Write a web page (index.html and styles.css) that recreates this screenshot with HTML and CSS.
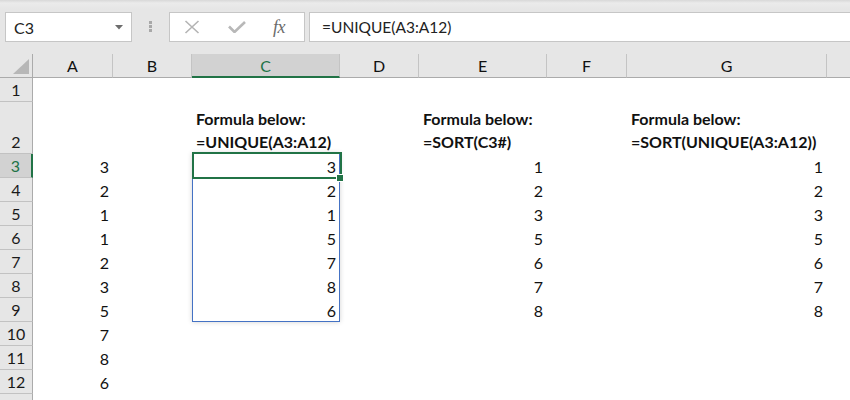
FILE: index.html
```html
<!DOCTYPE html>
<html>
<head>
<meta charset="utf-8">
<link rel="stylesheet" href="styles.css">
</head>
<body>
<div class="toolbar">
  <div class="namebox"><span>C3</span><svg class="dd" width="8" height="5" viewBox="0 0 8 5"><path d="M0 0h8L4 4.5z" fill="#6d6d6d"/></svg></div>
  <div class="grip"><i></i><i></i><i></i></div>
  <div class="fbtns">
    <svg class="ico-x" width="16" height="14" viewBox="0 0 16 14"><path d="M1.5 1L14.5 13M14.5 1L1.5 13" stroke="#b4b4b4" stroke-width="1.6" fill="none"/></svg>
    <svg class="ico-ok" width="18" height="12" viewBox="0 0 18 12"><path d="M1 5.5L6.5 11L17 1" stroke="#b8b8b8" stroke-width="2.6" fill="none"/></svg>
    <span class="fx">fx</span>
  </div>
  <div class="fbar">=UNIQUE(A3:A12)</div>
</div>
<div class="sheet">
  <div class="row hdr">
    <div class="rh corner"><svg class="tri" width="16" height="15" viewBox="0 0 16 15"><polygon points="16,0 16,15 0,15" fill="#b7b7b7"/></svg></div>
    <div class="ch a">A</div><div class="ch b">B</div><div class="ch c sel">C</div><div class="ch d">D</div><div class="ch e">E</div><div class="ch f">F</div><div class="ch g">G</div><div class="ch h"></div>
  </div>
  <div class="row">
    <div class="rh">1</div>
    <div class="cell a"></div><div class="cell b"></div><div class="cell c"></div><div class="cell d"></div><div class="cell e"></div><div class="cell f"></div><div class="cell g"></div><div class="cell h"></div>
  </div>
  <div class="row tall">
    <div class="rh">2</div>
    <div class="cell a"></div><div class="cell b"></div>
    <div class="cell c head"><span>Formula below:</span><span>=UNIQUE(A3:A12)</span></div>
    <div class="cell d"></div>
    <div class="cell e head"><span>Formula below:</span><span>=SORT(C3#)</span></div>
    <div class="cell f"></div>
    <div class="cell g head"><span>Formula below:</span><span>=SORT(UNIQUE(A3:A12))</span></div>
    <div class="cell h"></div>
  </div>
  <div class="row">
    <div class="rh sel">3</div>
    <div class="cell a num">3</div><div class="cell b"></div><div class="cell c num">3</div><div class="cell d"></div><div class="cell e num">1</div><div class="cell f"></div><div class="cell g num">1</div><div class="cell h"></div>
  </div>
  <div class="row">
    <div class="rh">4</div>
    <div class="cell a num">2</div><div class="cell b"></div><div class="cell c num">2</div><div class="cell d"></div><div class="cell e num">2</div><div class="cell f"></div><div class="cell g num">2</div><div class="cell h"></div>
  </div>
  <div class="row">
    <div class="rh">5</div>
    <div class="cell a num">1</div><div class="cell b"></div><div class="cell c num">1</div><div class="cell d"></div><div class="cell e num">3</div><div class="cell f"></div><div class="cell g num">3</div><div class="cell h"></div>
  </div>
  <div class="row">
    <div class="rh">6</div>
    <div class="cell a num">1</div><div class="cell b"></div><div class="cell c num">5</div><div class="cell d"></div><div class="cell e num">5</div><div class="cell f"></div><div class="cell g num">5</div><div class="cell h"></div>
  </div>
  <div class="row">
    <div class="rh">7</div>
    <div class="cell a num">2</div><div class="cell b"></div><div class="cell c num">7</div><div class="cell d"></div><div class="cell e num">6</div><div class="cell f"></div><div class="cell g num">6</div><div class="cell h"></div>
  </div>
  <div class="row">
    <div class="rh">8</div>
    <div class="cell a num">3</div><div class="cell b"></div><div class="cell c num">8</div><div class="cell d"></div><div class="cell e num">7</div><div class="cell f"></div><div class="cell g num">7</div><div class="cell h"></div>
  </div>
  <div class="row">
    <div class="rh">9</div>
    <div class="cell a num">5</div><div class="cell b"></div><div class="cell c num">6</div><div class="cell d"></div><div class="cell e num">8</div><div class="cell f"></div><div class="cell g num">8</div><div class="cell h"></div>
  </div>
  <div class="row">
    <div class="rh">10</div>
    <div class="cell a num">7</div><div class="cell b"></div><div class="cell c"></div><div class="cell d"></div><div class="cell e"></div><div class="cell f"></div><div class="cell g"></div><div class="cell h"></div>
  </div>
  <div class="row">
    <div class="rh">11</div>
    <div class="cell a num">8</div><div class="cell b"></div><div class="cell c"></div><div class="cell d"></div><div class="cell e"></div><div class="cell f"></div><div class="cell g"></div><div class="cell h"></div>
  </div>
  <div class="row">
    <div class="rh">12</div>
    <div class="cell a num">6</div><div class="cell b"></div><div class="cell c"></div><div class="cell d"></div><div class="cell e"></div><div class="cell f"></div><div class="cell g"></div><div class="cell h"></div>
  </div>
  <div class="row">
    <div class="rh"></div>
    <div class="cell a"></div><div class="cell b"></div><div class="cell c"></div><div class="cell d"></div><div class="cell e"></div><div class="cell f"></div><div class="cell g"></div><div class="cell h"></div>
  </div>
  <div class="spill"></div>
  <div class="active"><span class="handle"></span></div>
</div>
</body>
</html>
```

FILE: styles.css
```css
* { box-sizing: border-box; }
html, body { margin: 0; padding: 0; overflow: hidden; background: #fff; }
body {
  width: 850px;
  height: 400px;
  font-family: Lato, "Liberation Sans", sans-serif;
  color: #111;
}

/* formula bar */
.toolbar {
  height: 54px;
  display: flex;
  align-items: flex-start;
  padding: 12px 0 0 5px;
  background: linear-gradient(#d8d8d8, #ebebeb 3px, #e6e6e6 9px);
}
.namebox {
  width: 127px;
  height: 30px;
  flex: none;
  display: flex;
  align-items: center;
  padding: 0 8px 0 8px;
  background: #fff;
  border: 1px solid #c6c6c6;
  font-size: 16px;
  color: #222;
}
.dd { margin-left: auto; }
.grip {
  margin: 9px 0 0 17px;
  display: flex;
  flex-direction: column;
  gap: 1px;
}
.grip i { display: block; width: 3px; height: 3px; background: #a8a8a8; }
.fbtns {
  margin-left: 17px;
  width: 136px;
  height: 30px;
  flex: none;
  display: flex;
  align-items: center;
  padding-left: 14px;
  background: #fff;
  border: 1px solid #c6c6c6;
}
.ico-ok { margin-left: 28px; }
.fx {
  margin-left: 27px;
  font-family: "Liberation Serif", serif;
  font-style: italic;
  font-size: 18px;
  color: #6b6b6b;
  letter-spacing: -0.5px;
}
.fbar {
  margin-left: 4px;
  flex: 1;
  height: 30px;
  padding-left: 12px;
  background: #fff;
  border: 1px solid #c6c6c6;
  border-right: 0;
  font-size: 15.5px;
  line-height: 28px;
  color: #222;
}

/* sheet */
.sheet { position: relative; }
.row { display: flex; height: 24px; }
.row.tall { height: 52px; }

.rh {
  width: 33px;
  flex: none;
  display: flex;
  align-items: flex-end;
  justify-content: center;
  background: #e6e6e6;
  border-right: 1px solid #ababab;
  border-bottom: 1px solid #c2c2c2;
  font-size: 16px;
  line-height: 23px;
  color: #1a1a1a;
}
.rh.sel {
  background: #d2d2d2;
  border-right: 2px solid #217346;
  color: #217346;
}
.corner { position: relative; border-bottom-color: #ababab; }
.tri { position: absolute; right: 3px; bottom: 3px; }

.ch {
  flex: none;
  background: #e6e6e6;
  border-right: 1px solid #c4c4c4;
  border-bottom: 1px solid #ababab;
  text-align: center;
  font-size: 16px;
  line-height: 23px;
  color: #111;
}
.ch.sel {
  background: #d2d2d2;
  border-bottom: 2px solid #217346;
  color: #217346;
}
.ch.h { flex: 1; border-right: 0; }

.a { width: 80px; }
.b { width: 79px; }
.c { width: 148px; }
.d { width: 79px; }
.e { width: 128px; }
.f { width: 80px; }
.g { width: 200px; }
.h { flex: 1; }

.cell { flex: none; background: #fff; font-size: 16px; }
.cell.h { flex: 1; }
.num {
  display: flex;
  align-items: flex-end;
  justify-content: flex-end;
  padding-right: 4px;
  line-height: 23px;
}
.head {
  display: flex;
  flex-direction: column;
  justify-content: flex-end;
  padding: 0 0 1px 4px;
  font-weight: bold;
  line-height: 23px;
  white-space: nowrap;
}

/* spill range + active cell overlays */
.spill {
  position: absolute;
  left: 192px;
  top: 99px;
  width: 148px;
  height: 169px;
  border: 1px solid #4472c4;
  box-shadow: 0 0 5px rgba(0, 0, 0, 0.18);
  pointer-events: none;
}
.active {
  position: absolute;
  left: 192px;
  top: 98px;
  width: 150px;
  height: 27px;
  border: 2px solid #217346;
}
.handle {
  position: absolute;
  left: 142px;
  top: 20px;
  width: 8px;
  height: 8px;
  background: #217346;
  border: 1px solid #fff;
}
```
